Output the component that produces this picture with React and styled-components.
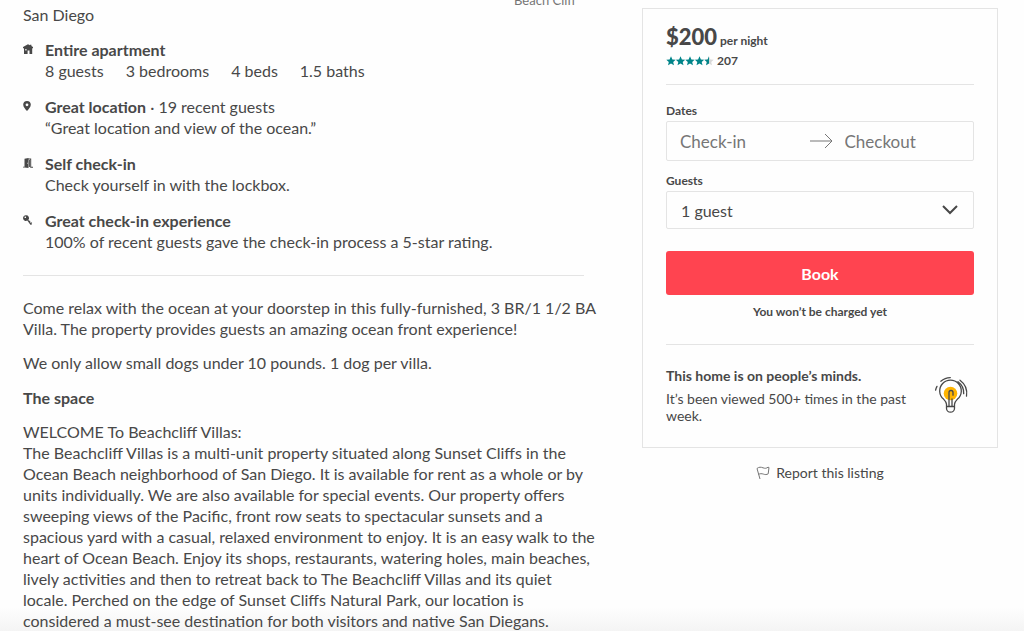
import styled, { createGlobalStyle } from 'styled-components';

const highlights = [
  {
    icon: 'home',
    title: 'Entire apartment',
    facts: ['8 guests', '3 bedrooms', '4 beds', '1.5 baths'],
  },
  {
    icon: 'pin',
    title: 'Great location',
    extra: ' · 19 recent guests',
    facts: ['“Great location and view of the ocean.”'],
  },
  {
    icon: 'door',
    title: 'Self check-in',
    facts: ['Check yourself in with the lockbox.'],
  },
  {
    icon: 'key',
    title: 'Great check-in experience',
    facts: ['100% of recent guests gave the check-in process a 5-star rating.'],
  },
];

const icons = {
  home: (
    <path fillRule="evenodd" d="M5 .3 6.900 1.200V.8h1.500v1.200L10 3v1.300H9.200V10H6.500V6.500H4.600V10H1V4.300H0V3zM2.300 5v1.600h1.200V5z" />
  ),
  pin: (
    <path fillRule="evenodd" d="M4 0a3.800 3.800 0 0 0-3.800 3.800C.2 6 2.500 8.500 4 10c1.500-1.500 3.800-4 3.800-6.200A3.800 3.800 0 0 0 4 0zm0 2.400a1.400 1.400 0 1 1 0 2.800 1.400 1.400 0 0 1 0-2.800z" />
  ),
  door: (
    <path fillRule="evenodd" d="M1.500.8 5.500 0v.6h2.700v8.200H10v1H7.200V1.500H5.500V10L1.500 9.600H0v-.9h1.500zM4.300 4.800v1h.6v-1zM5.900 2h1v7h-1z" />
  ),
  key: (
    <path fillRule="evenodd" d="M3 .3A2.800 2.800 0 1 0 4.300 5.500L7.400 9.700 9 9.500 8.500 8.600 9.200 8 8.300 7.300 7.400 7.800 6.800 7 7.500 6.300 6.800 5.500 6.100 6 5.400 4.800A2.800 2.800 0 0 0 3 .3zM2 1.500a.8.8 0 1 1 0 1.500.8.8 0 0 1 0-1.500z" />
  ),
};

const starPath = 'M5 .3 6.400 3.400 9.700 3.700 7.200 5.900 8 9.300 5 7.500 2 9.300 2.800 5.900 .3 3.700 3.600 3.400z';

function Stars() {
  return (
    <StarSvg viewBox="0 0 48 10" role="img" aria-label="4.5 out of 5">
      {[0, 1, 2, 3].map((n) => (
        <path key={n} d={starPath} transform={`translate(${n * 9.5} 0)`} fill="#008489" />
      ))}
      <path d={starPath} transform="translate(38 0)" fill="#d8d8d8" />
      <path d="M5 .3V7.500L2 9.300 2.800 5.900 .3 3.700 3.600 3.400z" transform="translate(38 0)" fill="#008489" />
    </StarSvg>
  );
}

function Bulb() {
  return (
    <BulbSvg viewBox="0 0 36 40" aria-hidden="true">
      <circle cx="17.500" cy="18.500" r="6.800" fill="#ffb400" />
      <g fill="none" stroke="#484848" strokeWidth="1.300" strokeLinecap="round" strokeLinejoin="round">
        <path d="M13.500 31.500v-2.200c0-2.300-1.300-3.400-3-5.200a10.800 10.800 0 1 1 14 0c-1.700 1.800-3 2.900-3 5.200v2.200z" />
        <path d="M13.500 32v1.200a4 4 0 0 0 8 0V32" />
        <path d="M16 31V17.500a2 2 0 0 1 4 0v2.700M19 31v-7" />
        <path d="M7.800 6.200a15 15 0 0 1 9.500-3.600" />
        <path d="M2.600 15.200c.3-1.600.8-2.700 1.400-3.800" />
        <path d="M25 6.700a14 14 0 0 1 5.700 12" />
        <path d="M27 5.200a16.500 16.500 0 0 1 6.500 16" />
      </g>
    </BulbSvg>
  );
}

function Listing() {
  return (
    <main>
      <Header>
        <div>San Diego</div>
        <Host href="#host">Beach Cliff</Host>
      </Header>

      <Highlights>
        {highlights.map((item) => (
          <Highlight key={item.icon}>
            <HighlightIcon viewBox="0 0 10 10" aria-hidden="true">{icons[item.icon]}</HighlightIcon>
            <div>
              <div><strong>{item.title}</strong>{item.extra}</div>
              <Facts>
                {item.facts.map((fact) => <span key={fact}>{fact}</span>)}
              </Facts>
            </div>
          </Highlight>
        ))}
      </Highlights>

      <Description>
        <p>
          Come relax with the ocean at your doorstep in this fully-furnished, 3 BR/1 1/2 BA<br />
          Villa. The property provides guests an amazing ocean front experience!
        </p>
        <p>We only allow small dogs under 10 pounds. 1 dog per villa.</p>
        <h2>The space</h2>
        <p>
          WELCOME To Beachcliff Villas:<br />
          The Beachcliff Villas is a multi-unit property situated along Sunset Cliffs in the<br />
          Ocean Beach neighborhood of San Diego. It is available for rent as a whole or by<br />
          units individually. We are also available for special events. Our property offers<br />
          sweeping views of the Pacific, front row seats to spectacular sunsets and a<br />
          spacious yard with a casual, relaxed environment to enjoy. It is an easy walk to the<br />
          heart of Ocean Beach. Enjoy its shops, restaurants, watering holes, main beaches,<br />
          lively activities and then to retreat back to The Beachcliff Villas and its quiet<br />
          locale. Perched on the edge of Sunset Cliffs Natural Park, our location is<br />
          considered a must-see destination for both visitors and native San Diegans.
        </p>
      </Description>
    </main>
  );
}

function Booking() {
  return (
    <aside>
      <Card>
        <Price><b>$200</b> per night</Price>
        <Rating><Stars />207</Rating>
        <Rule />

        <Form onSubmit={(e) => e.preventDefault()}>
          <Label htmlFor="checkin">Dates</Label>
          <DateBox>
            <DateInput id="checkin" placeholder="Check-in" />
            <Arrow viewBox="0 0 24 16" aria-hidden="true">
              <path d="M1 8h22M16 1l7 7-7 7" />
            </Arrow>
            <DateInput aria-label="Checkout" placeholder="Checkout" />
          </DateBox>

          <Label htmlFor="guests">Guests</Label>
          <SelectBox>
            <Select id="guests" defaultValue="1">
              <option value="1">1 guest</option>
              <option value="2">2 guests</option>
              <option value="3">3 guests</option>
            </Select>
            <Chevron viewBox="0 0 16 10" aria-hidden="true">
              <path d="M1 1l7 7 7-7" />
            </Chevron>
          </SelectBox>

          <BookButton type="submit">Book</BookButton>
          <Note>You won’t be charged yet</Note>
        </Form>
        <Rule />

        <Interest>
          <div>
            <h3>This home is on people’s minds.</h3>
            <p>It’s been viewed 500+ times in the past week.</p>
          </div>
          <Bulb />
        </Interest>
      </Card>

      <Report href="#report">
        <Flag viewBox="0 0 14 14" aria-hidden="true">
          <path d="M4 13 1 2.500C3 .8 5 1 7 1.800s3.500.6 5-.6l1 .3-.8 6.300c-1.500 1-3.200.9-4.800.3s-3.400-.6-4.900.3" />
        </Flag>
        Report this listing
      </Report>
    </aside>
  );
}

function App() {
  return (
    <>
      <GlobalStyle />
      <Page>
        <Listing />
        <Booking />
      </Page>
    </>
  );
}

const GlobalStyle = createGlobalStyle`
  * {
    box-sizing: border-box;
  }
  body {
    margin: 0;
    color: #484848;
    font: 16px/21px Lato, sans-serif;
    background: linear-gradient(to top, #f4f4f4, #fefefe 24px) fixed;
  }
  h2, h3, p {
    margin: 0;
  }
  a {
    color: inherit;
    text-decoration: none;
  }
  input, select, button {
    font: inherit;
    color: inherit;
  }
`;

const Page = styled.div`
  display: grid;
  grid-template-columns: minmax(0, 1fr) 356px;
  column-gap: 58px;
  align-items: start;
  padding: 0 26px 0 23px;
`;

const Header = styled.header`
  display: flex;
  justify-content: space-between;
  align-items: flex-start;
  padding: 4px 8px 0 0;
`;

const Host = styled.a`
  margin-top: -14px;
  color: #767676;
  font-size: 13px;
`;

const Highlights = styled.div`
  display: flex;
  flex-direction: column;
  gap: 15px;
  padding: 14px 0 23px;
  border-bottom: 1px solid #e4e4e4;
`;

const Highlight = styled.section`
  display: flex;
  gap: 12px;
`;

const HighlightIcon = styled.svg`
  width: 10px;
  height: 10px;
  margin-top: 5px;
  fill: #484848;
`;

const Facts = styled.div`
  display: flex;
  gap: 22px;
`;

const Description = styled.div`
  display: flex;
  flex-direction: column;
  gap: 13px;
  margin-right: -24px;
  padding-top: 21px;

  h2 {
    margin-top: 1px;
    font-size: 16px;
    line-height: 21px;
  }
`;

const Card = styled.div`
  margin-top: 8px;
  padding: 14px 23px 23px;
  border: 1px solid #e4e4e4;
`;

const Price = styled.div`
  display: flex;
  align-items: baseline;
  gap: 3px;
  height: 28px;
  font-size: 12px;
  font-weight: 700;
  line-height: 28px;

  b {
    font-size: 22px;
  }
`;

const Rating = styled.div`
  display: flex;
  align-items: center;
  gap: 3px;
  height: 19px;
  margin-bottom: 14px;
  font-size: 12px;
  font-weight: 700;
`;

const StarSvg = styled.svg`
  width: 48px;
  height: 10px;
`;

const Rule = styled.hr`
  height: 1px;
  margin: 0;
  border: 0;
  background: #e4e4e4;
`;

const Form = styled.form`
  display: flex;
  flex-direction: column;
  padding: 18px 0 24px;
`;

const Label = styled.label`
  margin-bottom: 2px;
  font-size: 12px;
  font-weight: 700;
  line-height: 16px;
`;

const DateBox = styled.div`
  display: flex;
  align-items: center;
  height: 40px;
  margin-bottom: 12px;
  padding-left: 13px;
  border: 1px solid #e4e4e4;
  border-radius: 2px;
  font-size: 17px;
`;

const DateInput = styled.input`
  flex: 1;
  min-width: 0;
  padding: 0;
  border: 0;
  outline: none;
  background: none;

  &::placeholder {
    color: #767676;
    opacity: 1;
  }
`;

const Arrow = styled.svg`
  flex: none;
  width: 24px;
  height: 16px;
  margin-right: 12px;
  fill: none;
  stroke: #767676;
`;

const SelectBox = styled.div`
  display: grid;
  align-items: center;
  height: 38px;
  margin-bottom: 22px;
  border: 1px solid #e4e4e4;
  border-radius: 2px;

  > * {
    grid-area: 1 / 1;
  }
`;

const Select = styled.select`
  width: 100%;
  height: 36px;
  padding: 0 14px;
  border: 0;
  outline: none;
  appearance: none;
  background: none;
`;

const Chevron = styled.svg`
  justify-self: end;
  width: 16px;
  height: 10px;
  margin-right: 15px;
  fill: none;
  stroke: #484848;
  stroke-width: 2px;
  pointer-events: none;
`;

const BookButton = styled.button`
  height: 44px;
  border: 0;
  border-radius: 3px;
  color: #fff;
  font-weight: 700;
  background: #ff4450;
  cursor: pointer;
`;

const Note = styled.p`
  margin-top: 9px;
  font-size: 12px;
  font-weight: 700;
  line-height: 16px;
  text-align: center;
`;

const Interest = styled.div`
  display: flex;
  justify-content: space-between;
  gap: 16px;
  padding-top: 22px;
  font-size: 14px;
  line-height: 17px;

  h3 {
    margin-bottom: 5px;
    font-size: 14px;
    line-height: 18px;
  }
`;

const BulbSvg = styled.svg`
  flex: none;
  width: 36px;
  height: 40px;
  margin: 8px 5px 0 0;
`;

const Report = styled.a`
  display: flex;
  justify-content: center;
  align-items: center;
  gap: 6px;
  margin-top: 14px;
  font-size: 14px;
`;

const Flag = styled.svg`
  width: 14px;
  height: 14px;
  fill: none;
  stroke: #767676;
`;

export default App;
